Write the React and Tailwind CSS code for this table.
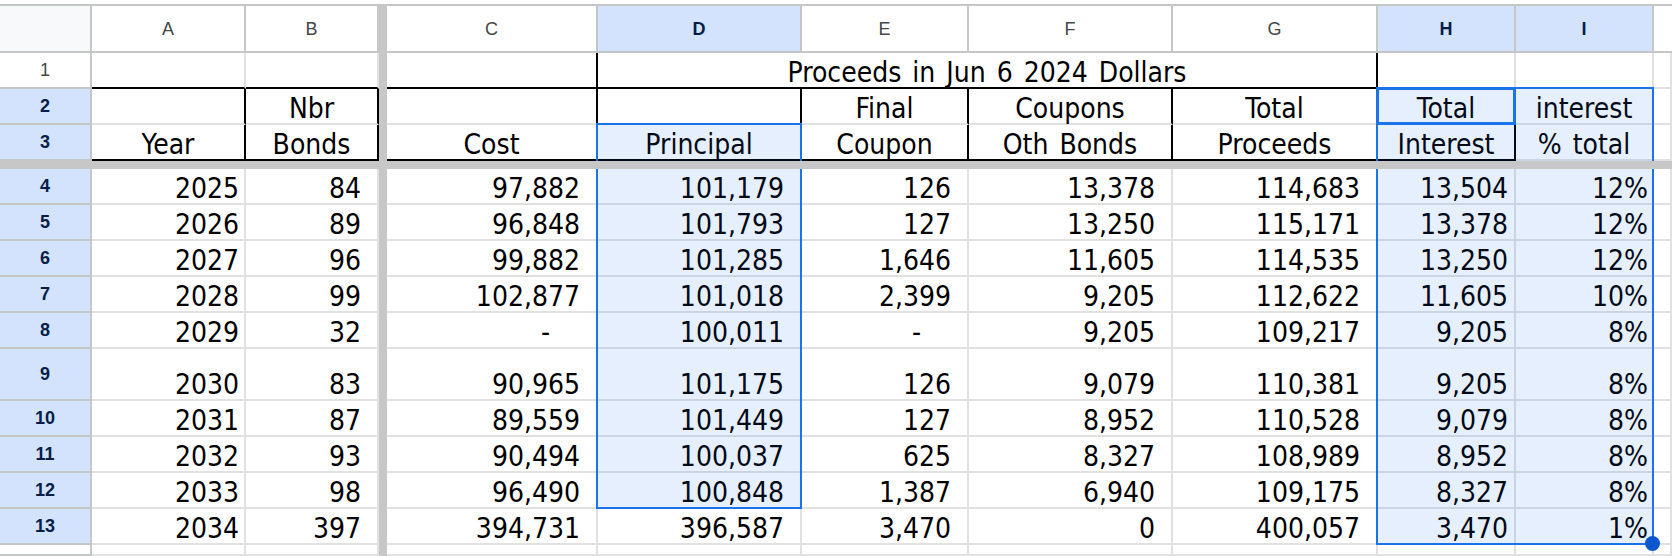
import React from "react";

const GRID =
  "grid grid-cols-[92px_154px_133px_8px_211px_204px_167px_204px_205px_138px_138px_18px] grid-rows-[47px_36px_36px_36px_8px_36px_36px_36px_36px_36px_52px_36px_36px_36px_36px_11px]";

const BODY_FONT = "font-['DejaVu_Sans_Condensed','DejaVu_Sans',sans-serif] font-stretch-condensed text-[28px] leading-[28px] text-black [word-spacing:3px]";
const HEAD_FONT = "font-['Liberation_Sans',Arial,sans-serif] text-[18px] [word-spacing:0px]";

const DATA = [
  ["2025", "84", "97,882", "101,179", "126", "13,378", "114,683", "13,504", "12%"],
  ["2026", "89", "96,848", "101,793", "127", "13,250", "115,171", "13,378", "12%"],
  ["2027", "96", "99,882", "101,285", "1,646", "11,605", "114,535", "13,250", "12%"],
  ["2028", "99", "102,877", "101,018", "2,399", "9,205", "112,622", "11,605", "10%"],
  ["2029", "32", "-", "100,011", "-", "9,205", "109,217", "9,205", "8%"],
  ["2030", "83", "90,965", "101,175", "126", "9,079", "110,381", "9,205", "8%"],
  ["2031", "87", "89,559", "101,449", "127", "8,952", "110,528", "9,079", "8%"],
  ["2032", "93", "90,494", "100,037", "625", "8,327", "108,989", "8,952", "8%"],
  ["2033", "98", "96,490", "100,848", "1,387", "6,940", "109,175", "8,327", "8%"],
  ["2034", "397", "394,731", "396,587", "3,470", "0", "400,057", "3,470", "1%"],
];

const PR = ["pr-[5px]", "pr-[16px]", "pr-[16px]", "pr-[16px]", "pr-[16px]", "pr-[16px]", "pr-[16px]", "pr-[6px]", "pr-[4px]"];

function Cell({ children, rb = false, bb = false, center = false, pr = "", extra = "" }) {
  const r = rb ? "border-r-black" : "border-r-[#e1e1e1]";
  const b = bb ? "border-b-black" : "border-b-[#e1e1e1]";
  return (
    <div className={`flex items-end whitespace-nowrap border-r-2 border-b-2 ${r} ${b} ${center ? "justify-center" : "justify-end"} ${pr} ${extra}`}>
      {children}
    </div>
  );
}

function RowHead({ n, sel }) {
  return (
    <div
      className={`flex items-center justify-center border-r-2 border-b-2 border-r-[#c4c7c5] border-b-[#c4c7c5] ${HEAD_FONT} ${
        sel ? "bg-[#d3e3fd] font-bold text-[#041e49]" : "bg-white text-[#444746]"
      }`}
    >
      {n}
    </div>
  );
}

function ColHead({ l, sel }) {
  return (
    <div
      className={`flex items-center justify-center border-r-2 border-b-2 border-[#c4c7c5] ${HEAD_FONT} ${
        sel ? "bg-[#d3e3fd] font-bold text-[#041e49]" : "bg-white text-[#444746]"
      }`}
    >
      {l}
    </div>
  );
}

const Freeze = () => <div className="bg-[#c7c7c7]" />;

export default function App() {
  return (
    <div className="w-[1672px] h-[556px] overflow-hidden bg-white">
      <div className="h-[4px]" />
      <div className="h-[2px] bg-[#c4c7c5]" />
      <div className="relative">
        <div className={`${GRID} ${BODY_FONT}`}>
          {/* column header row */}
          <div className="border-r-2 border-b-2 border-[#c4c7c5] bg-[#f8f9fa]" />
          <ColHead l="A" />
          <ColHead l="B" />
          <Freeze />
          <ColHead l="C" />
          <ColHead l="D" sel />
          <ColHead l="E" />
          <ColHead l="F" />
          <ColHead l="G" />
          <ColHead l="H" sel />
          <ColHead l="I" sel />
          <div className="border-b-2 border-[#c4c7c5] bg-white" />

          {/* row 1 */}
          <RowHead n="1" />
          <Cell bb />
          <Cell bb />
          <Freeze />
          <Cell bb rb />
          <div className="col-span-4 flex items-end justify-center whitespace-nowrap border-r-2 border-b-2 border-r-black border-b-black">
            Proceeds in Jun 6 2024 Dollars
          </div>
          <Cell />
          <Cell />
          <Cell />

          {/* row 2 */}
          <RowHead n="2" sel />
          <Cell rb />
          <Cell rb center>Nbr</Cell>
          <Freeze />
          <Cell rb />
          <Cell rb />
          <Cell rb center>Final</Cell>
          <Cell rb center>Coupons</Cell>
          <Cell rb center>Total</Cell>
          <Cell center>Total</Cell>
          <Cell center>interest</Cell>
          <Cell />

          {/* row 3 */}
          <RowHead n="3" sel />
          <Cell rb bb center>Year</Cell>
          <Cell rb bb center>Bonds</Cell>
          <Freeze />
          <Cell rb bb center>Cost</Cell>
          <Cell rb bb center>Principal</Cell>
          <Cell rb bb center>Coupon</Cell>
          <Cell rb bb center>Oth Bonds</Cell>
          <Cell rb bb center>Proceeds</Cell>
          <Cell rb bb center>Interest</Cell>
          <Cell center>% total</Cell>
          <Cell />

          {/* freeze row */}
          <div className="col-span-12 bg-[#c7c7c7]" />

          {DATA.map((row, i) => (
            <React.Fragment key={i}>
              <RowHead n={String(i + 4)} sel />
              <Cell pr={PR[0]}>{row[0]}</Cell>
              <Cell pr={PR[1]}>{row[1]}</Cell>
              <Freeze />
              {row.slice(2).map((v, j) => (
                <Cell key={j} pr={v === "-" ? "pr-[46px]" : PR[j + 2]}>
                  {v}
                </Cell>
              ))}
              <Cell />
            </React.Fragment>
          ))}

          {/* row 14 */}
          <RowHead n="" />
          <Cell />
          <Cell />
          <Freeze />
          <Cell />
          <Cell />
          <Cell />
          <Cell />
          <Cell />
          <Cell />
          <Cell />
          <Cell />
        </div>

        {/* selection overlays */}
        <div className={`absolute inset-0 pointer-events-none ${GRID}`}>
          <div className="col-start-6 row-start-4 row-end-15 -ml-[2px] -mt-[2px] border-2 border-[#1a73e8] bg-[#0e65eb]/10" />
          <div className="relative col-start-10 col-span-2 row-start-3 row-end-16 -ml-[2px] -mt-[2px] border-2 border-[#1a73e8] bg-[#0e65eb]/10">
            <div className="absolute -right-[8px] -bottom-[8px] w-[15px] h-[15px] rounded-full bg-[#0b57d0]" />
          </div>
          <div className="relative col-start-10 row-start-3 -ml-[2px] -mt-[2px] border-[3px] border-[#1a73e8]" />
          <div className="relative col-start-1 col-span-12 row-start-5 bg-[#c7c7c7]" />
        </div>
      </div>
    </div>
  );
}
